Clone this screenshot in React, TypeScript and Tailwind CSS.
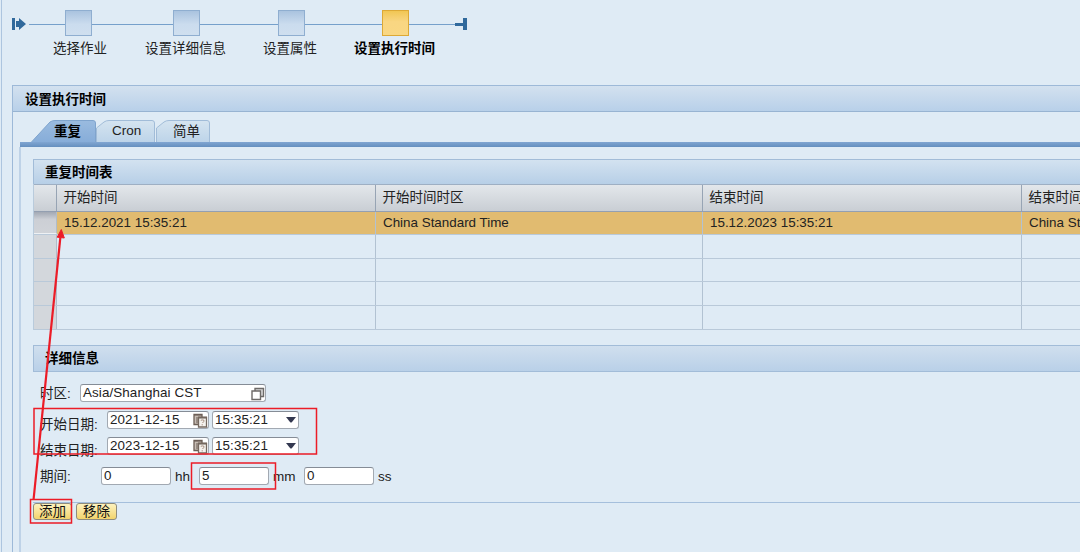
import { clsx } from "clsx"

const rows = [
  ["15.12.2021 15:35:21", "China Standard Time", "15.12.2023 15:35:21", "China Standard Time"],
  ["", "", "", ""],
  ["", "", "", ""],
  ["", "", "", ""],
  ["", "", "", ""],
]

const columns = ["开始时间", "开始时间时区", "结束时间", "结束时间时区"]

const columnWidths = ["w-[319px]", "w-[327px]", "w-[319px]", "w-[319px]"]

const rowHeights = ["h-[23px]", "h-6", "h-[23px]", "h-6", "h-6"]

const Step = ({ active = false }: { active?: boolean }) => (
  <div
    className={clsx(
      "h-[26px] w-[27px] shrink-0 border",
      active
        ? "border-[#dda936] bg-linear-to-b from-[#f1c653] via-[#f9d682] via-45% to-[#f9d783]"
        : "border-[#8faed0] bg-linear-to-b from-[#aac3df] via-[#cbdcee] via-55% to-[#cfdfef]"
    )}
  />
)

const Connector = ({ className }: { className: string }) => (
  <div className={clsx("mt-[3px] h-px shrink-0 bg-[#76a0cb]", className)} />
)

const Roadmap = () => (
  <div className="h-[84px] pt-[10px]">
    <div className="flex items-center pl-3">
      <svg width="17" height="14" viewBox="0 0 17 14" className="mt-[2px] shrink-0" fill="#30699c">
        <path d="M0 1h3v12H0zM4 4h3V1l7 6-7 6v-3H4z" />
      </svg>
      <Connector className="w-9" />
      <Step />
      <Connector className="w-[81px]" />
      <Step />
      <Connector className="w-[78px]" />
      <Step />
      <Connector className="w-[77px]" />
      <Step active />
      <Connector className="w-[46px]" />
      <svg width="12" height="14" viewBox="0 0 12 14" className="mt-[2px] shrink-0" fill="#30699c">
        <path d="M0 6h8V1h4v12H8V9H0z" />
      </svg>
    </div>
    <div className="flex pl-[53px] pt-[3px] leading-5">
      <span className="w-[92px]">选择作业</span>
      <span className="w-[118px]">设置详细信息</span>
      <span className="w-[91px]">设置属性</span>
      <span className="font-bold text-black">设置执行时间</span>
    </div>
  </div>
)

interface TabProps {
  label: string
  path: string
  width: number
  active?: boolean
  className: string
}

const Tab = ({ label, path, width, active, className }: TabProps) => (
  <div className={clsx("relative h-[22px] shrink-0", className)}>
    <svg className="absolute inset-0" width={width} height="22">
      <defs>
        <linearGradient id={`tab-${width}`} x1="0" y1="0" x2="0" y2="1">
          <stop offset="0" stopColor={active ? "#9abbdf" : "#d5e4f0"} />
          <stop offset="1" stopColor={active ? "#87add9" : "#bdd4e9"} />
        </linearGradient>
      </defs>
      <path d={path} fill={`url(#tab-${width})`} stroke={active ? "#7fa4cd" : "#a1bcd8"} />
    </svg>
    <span className={clsx("relative block", active && "font-bold text-black")}>{label}</span>
  </div>
)

const Table = () => (
  <div className="w-[1313px] border-l border-[#b9cbdc]">
    <div className="flex h-7 border-y border-t-[#9eafc3] border-b-[#939fb1] bg-linear-to-b from-[#e3e7eb] to-[#c9ced4]">
      <div className="w-[23px] shrink-0 border-r border-[#97a4b4]" />
      {columns.map((column, i) => (
        <div
          key={i}
          className={clsx("shrink-0 border-r border-[#97a4b4] pl-[6.5px] leading-[26px]", columnWidths[i])}
        >
          {column}
        </div>
      ))}
    </div>
    {rows.map((row, r) => (
      <div
        key={r}
        className={clsx("flex border-b border-[#b9c9d9]", rowHeights[r], r === 0 && "bg-[#e1bb70]")}
      >
        <div
          className={clsx(
            "w-[23px] shrink-0 border-r border-[#b0bcc9]",
            r === 0
              ? "border-b border-b-[#eef1f4] bg-linear-to-b from-[#a3a9b4] via-[#cccfd5] via-35% to-[#d0d3d8]"
              : "bg-[#d3d7dc]"
          )}
        />
        {row.map((cell, i) => (
          <div
            key={i}
            className={clsx("shrink-0 border-r border-[#b2c2d2] pl-[7px] text-[13.4px] leading-[22px]", columnWidths[i])}
          >
            {cell}
          </div>
        ))}
      </div>
    ))}
  </div>
)

const Field = ({ value, className, children }: { value: string; className: string; children?: React.ReactNode }) => (
  <div
    className={clsx(
      "flex h-[18px] shrink-0 items-center justify-between rounded-[3px] border border-[#a2a9b2] border-t-[#858c96] bg-white pl-[2px] text-[13.4px] leading-4",
      className
    )}
  >
    <span className="tracking-[0.1px]">{value}</span>
    {children}
  </div>
)

const CopyIcon = () => (
  <svg width="14" height="14" viewBox="0 0 14 14" className="mt-[2px]" fill="white" stroke="#6d6a68" strokeWidth="1.4">
    <path d="M4 1.500h8.500v8H4z" fill="#d9d9d9" />
    <path d="M1 4h8.500v8.500H1z" />
  </svg>
)

const DateIcon = () => (
  <svg width="15" height="15" viewBox="0 0 15 15" fill="none">
    <path d="M1 1.500h8v10H1z" fill="#c7bdb4" stroke="#6d5f56" strokeWidth="1.300" />
    <path d="M1 2h8M3 5h3M3 7h3M3 9h3" stroke="#6d5f56" />
    <path d="M5.500 4.500h8v9.500h-8z" fill="#f5f2ee" stroke="#75685f" strokeWidth="1.300" />
    <path d="M5 4.500h9" stroke="#75685f" strokeWidth="1.800" />
    <path d="M7.800 7.300q1.700-.8 3.200 0 .3 1.200-1.500 2.700M9.200 11.200v1.200" stroke="#a58c7c" />
  </svg>
)

const Arrow = () => (
  <svg width="10" height="6" viewBox="0 0 10 6" className="mr-[2px]" fill="#333850">
    <path d="M0 0h10L6 5Q5 6 4 5z" />
  </svg>
)

const DateRow = ({ label, date, time, className }: { label: string; date: string; time: string; className: string }) => (
  <div className={clsx("flex pl-[7px]", className)}>
    <span className="w-[67px] pt-1 leading-5">{label}</span>
    <Field value={date} className="w-[102px]">
      <DateIcon />
    </Field>
    <Field value={time} className="ml-[3px] w-[87px]">
      <Arrow />
    </Field>
  </div>
)

const Button = ({ label, className }: { label: string; className: string }) => (
  <button
    className={clsx(
      "h-[17px] rounded-[3px] border border-[#8f8c7c] bg-linear-to-b from-[#fdf2bd] to-[#f3d46b] leading-[15px] text-[#111]",
      className
    )}
  >
    {label}
  </button>
)

// Red callout boxes and the arrow from the add button to the new row
const Callouts = () => (
  <div className="pointer-events-none absolute inset-0">
    <svg className="absolute inset-0" width="1080" height="552" fill="none" stroke="#ec1c27">
      <path d="M33.500 500 60.300 238" strokeWidth="2.200" />
      <path d="M61.300 229.500 57.200 237.200 64.300 238z" fill="#ec1c27" strokeWidth="1" />
      <path d="M34 408.500h282.500v45.500H34zM191.500 463h84v26h-84zM30.500 499.500h41V523h-41z" strokeWidth="1.500" />
    </svg>
  </div>
)

const App = () => (
  <div className="relative h-[552px] w-[1080px] overflow-hidden whitespace-nowrap bg-[#dfebf5] font-['Liberation_Sans','Noto_Sans_CJK_SC',sans-serif] text-[13.5px] text-[#222]">
    <div className="ml-px h-full border-l border-[#adc5df] pl-[10px]">
      <div className="-ml-3">
        <Roadmap />
      </div>
      <div className="mt-px h-[468px] border-l border-t border-[#9db9d8]">
        <div className="h-[26px] border-b border-[#98b4d2] bg-linear-to-b from-[#d3e1ef] to-[#b8d0e9] pl-3 font-bold leading-[27px] text-black">
          设置执行时间
        </div>
        <div className="flex pl-[18px] pt-[8px]">
          <Tab label="重复" active width={65} className="w-[65px] pl-[23px] leading-6" path="M.5 22 L19 2 Q21 .5 24 .5 H62 Q64.500 .5 64.500 3 V22" />
          <Tab label="Cron" width={60} className="w-[60px] pl-4 leading-[22px]" path="M.5 22 V8 L8 2 Q10 .5 13 .5 H56 Q58.500 .5 58.500 3 V22" />
          <Tab label="简单" width={54} className="w-[54px] pl-[17px] leading-6" path="M.5 22 V8 L8 2 Q10 .5 13 .5 H51 Q53.500 .5 53.500 3 V22" />
        </div>
        <div className="ml-[7px] h-[5px] bg-linear-to-b from-[#80a6d2] to-[#658fbf]" />
        <div className="ml-[6px] h-[405px] border-l-2 border-[#bed2e7] pl-3 pt-[12px]">
          <div className="h-[25px] border-l border-t border-[#a2bcd8] bg-linear-to-b from-[#d3e2f0] to-[#b7cfe7] pl-[11px] font-bold leading-[25px] text-black">
            重复时间表
          </div>
          <Table />
          <div className="mt-[15px] h-[27px] border-y border-l border-[#a2bcd8] bg-linear-to-b from-[#d0dfee] to-[#b9d0e8] pl-[11px] font-bold leading-[25px] text-black">
            详细信息
          </div>
          <div className="h-[131px] border-b border-[#a5bfdc] pt-[12px]">
            <div className="flex h-[18px] pl-[7px]">
              <span className="w-10 leading-[19px]">时区:</span>
              <Field value="Asia/Shanghai CST" className="w-[186px]">
                <CopyIcon />
              </Field>
            </div>
            <DateRow label="开始日期:" date="2021-12-15" time="15:35:21" className="mt-[9px] h-[26px]" />
            <DateRow label="结束日期:" date="2023-12-15" time="15:35:21" className="h-[30px]" />
            <div className="flex pl-[7px] leading-[19px]">
              <span className="w-[61px]">期间:</span>
              <Field value="0" className="w-[70px]" />
              <span className="w-7 pl-1">hh</span>
              <Field value="5" className="w-[70px]" />
              <span className="w-[35px] pl-1">mm</span>
              <Field value="0" className="w-[70px]" />
              <span className="pl-1">ss</span>
            </div>
          </div>
          <div className="flex gap-1">
            <Button label="添加" className="w-[39px]" />
            <Button label="移除" className="w-[41px]" />
          </div>
        </div>
      </div>
    </div>
    <Callouts />
  </div>
)

export default App
